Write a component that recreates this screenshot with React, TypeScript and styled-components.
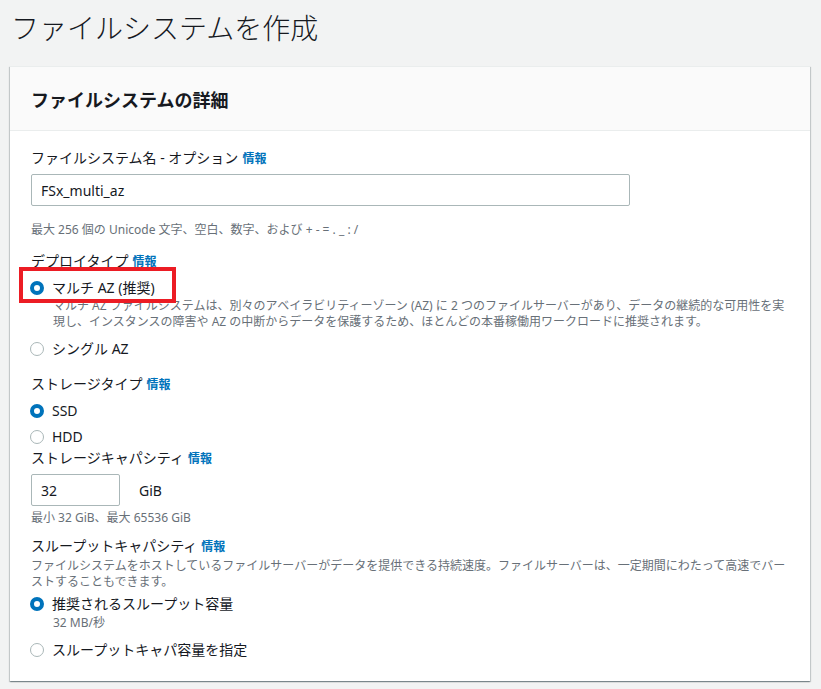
import React from 'react';
import styled, { createGlobalStyle } from 'styled-components';

const GlobalStyle = createGlobalStyle`
  body {
    margin: 0;
    background: #f2f3f3;
    font-family: "Noto Sans", "Noto Sans CJK JP", sans-serif;
    color: #16191f;
  }
`;

const StyledPage = styled.div`
  padding: 8px 11px 8px 10px;
`;

const StyledTitle = styled.h1`
  margin: 0 0 0 1px;
  font-size: 28px;
  line-height: 40px;
  font-weight: 300;
  color: #16191f;
`;

const StyledCard = styled.section`
  margin-top: 18px;
  background: #fff;
  box-shadow: 0 1px 1px 0 rgba(0, 28, 36, 0.3), 1px 1px 1px 0 rgba(0, 28, 36, 0.15),
    -1px 1px 1px 0 rgba(0, 28, 36, 0.15);
  border-top: 1px solid #eaeded;
`;

const StyledCardHeader = styled.div`
  display: flex;
  align-items: center;
  height: 63px;
  padding: 0 21px;
  background: #fafafa;
  border-bottom: 1px solid #eaeded;
`;

const StyledCardTitle = styled.h2`
  margin: 0;
  font-size: 18px;
  font-weight: 700;
`;

const StyledCardBody = styled.div`
  display: flex;
  flex-direction: column;
  padding: 17px 20px 21px 21px;
`;

const StyledLabel = styled.div<{ $mt?: number }>`
  font-size: 14px;
  line-height: 20px;
  margin-top: ${({ $mt }) => $mt ?? 0}px;
`;

const StyledInfo = styled.a`
  margin-left: 4px;
  font-size: 12px;
  font-weight: 700;
  color: #0073bb;
  text-decoration: none;
`;

const StyledInput = styled.input<{ $width: number }>`
  box-sizing: border-box;
  width: ${({ $width }) => $width}px;
  height: 32px;
  padding: 0 9px;
  border: 1px solid #aab7b8;
  border-radius: 2px;
  font-family: inherit;
  font-size: 14px;
  color: #16191f;
  background: #fff;
`;

const StyledHint = styled.div<{ $mt?: number; $indent?: boolean }>`
  font-size: 12px;
  line-height: 16px;
  color: #687078;
  margin-top: ${({ $mt }) => $mt ?? 0}px;
  padding-left: ${({ $indent }) => ($indent ? 22 : 0)}px;
`;

const StyledRadioRow = styled.label<{ $mt?: number }>`
  position: relative;
  display: flex;
  align-items: center;
  gap: 8px;
  font-size: 14px;
  line-height: 20px;
  margin-top: ${({ $mt }) => $mt ?? 0}px;
`;

const StyledRadio = styled.span<{ $checked?: boolean }>`
  box-sizing: border-box;
  flex: 0 0 14px;
  width: 14px;
  height: 14px;
  margin-left: -1px;
  border-radius: 50%;
  background: #fff;
  border: ${({ $checked }) => ($checked ? '4px solid #0073bb' : '1.5px solid #aab7b8')};
`;

const StyledHighlight = styled.span`
  position: absolute;
  left: -12px;
  top: -11px;
  width: 157px;
  height: 36px;
  box-sizing: border-box;
  border: 4px solid #ec1c24;
  pointer-events: none;
`;

const StyledInputRow = styled.div<{ $mt?: number }>`
  display: flex;
  align-items: center;
  gap: 19px;
  margin-top: ${({ $mt }) => $mt ?? 0}px;
`;

const StyledUnit = styled.span`
  font-size: 14px;
`;

const Label = ({ text, mt }: { text: string; mt?: number }) => (
  <StyledLabel $mt={mt}>
    {text}
    <StyledInfo href="#">情報</StyledInfo>
  </StyledLabel>
);

type RadioProps = {
  label: string;
  checked?: boolean;
  mt?: number;
  highlight?: boolean;
};

const Radio = ({ label, checked, mt, highlight }: RadioProps) => (
  <StyledRadioRow $mt={mt}>
    <StyledRadio $checked={checked} />
    {label}
    {highlight && <StyledHighlight />}
  </StyledRadioRow>
);

export default function App() {
  return (
    <StyledPage>
      <GlobalStyle />
      <StyledTitle>ファイルシステムを作成</StyledTitle>
      <StyledCard>
        <StyledCardHeader>
          <StyledCardTitle>ファイルシステムの詳細</StyledCardTitle>
        </StyledCardHeader>
        <StyledCardBody>
          <Label text="ファイルシステム名 - オプション" />
          <StyledInputRow $mt={5}>
            <StyledInput $width={599} defaultValue="FSx_multi_az" />
          </StyledInputRow>
          <StyledHint $mt={16}>
            最大 256 個の Unicode 文字、空白、数字、および + - = . _ : /
          </StyledHint>

          <Label text="デプロイタイプ" mt={13} />
          <Radio label="マルチ AZ (推奨)" checked highlight mt={6} />
          <StyledHint $indent>
            マルチ AZ ファイルシステムは、別々のアベイラビリティーゾーン (AZ) に 2
            つのファイルサーバーがあり、データの継続的な可用性を実現し、インスタンスの障害や AZ
            の中断からデータを保護するため、ほとんどの本番稼働用ワークロードに推奨されます。
          </StyledHint>
          <Radio label="シングル AZ" mt={9} />

          <Label text="ストレージタイプ" mt={15} />
          <Radio label="SSD" checked mt={6} />
          <Radio label="HDD" mt={6} />

          <Label text="ストレージキャパシティ" mt={1} />
          <StyledInputRow $mt={5}>
            <StyledInput $width={89} defaultValue="32" />
            <StyledUnit>GiB</StyledUnit>
          </StyledInputRow>
          <StyledHint $mt={4}>最小 32 GiB、最大 65536 GiB</StyledHint>

          <Label text="スループットキャパシティ" mt={10} />
          <StyledHint $mt={1}>
            ファイルシステムをホストしているファイルサーバーがデータを提供できる持続速度。ファイルサーバーは、一定期間にわたって高速でバーストすることもできます。
          </StyledHint>
          <Radio label="推奨されるスループット容量" checked mt={4} />
          <StyledHint $indent $mt={1}>32 MB/秒</StyledHint>
          <Radio label="スループットキャパ容量を指定" mt={9} />
        </StyledCardBody>
      </StyledCard>
    </StyledPage>
  );
}
